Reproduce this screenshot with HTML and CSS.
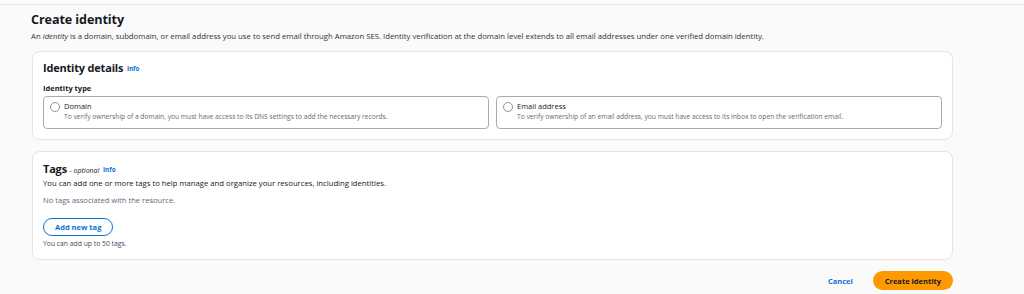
FILE: index.html
```html
<!DOCTYPE html>
<html lang="en">
<head>
    <meta charset="UTF-8">
    <meta name="viewport" content="width=device-width, initial-scale=1.0">
    <title>Create identity - Amazon SES</title>
    <link rel="stylesheet" href="styles.css">
</head>
<body>
    <div class="topline"></div>
    <main class="page">
        <h1>Create identity</h1>
        <p class="lead">An <i>identity</i> is a domain, subdomain, or email address you use to send email through Amazon SES. Identity verification at the domain level extends to all email addresses under one verified domain identity.</p>

        <section class="card details">
            <h2>Identity details <a class="info" href="#">Info</a></h2>
            <div class="field-label">Identity type</div>
            <div class="tiles">
                <label class="tile">
                    <span class="radio"></span>
                    <span class="tile-text">
                        <span class="tile-title">Domain</span>
                        <span class="tile-desc">To verify ownership of a domain, you must have access to its DNS settings to add the necessary records.</span>
                    </span>
                </label>
                <label class="tile">
                    <span class="radio"></span>
                    <span class="tile-text">
                        <span class="tile-title">Email address</span>
                        <span class="tile-desc">To verify ownership of an email address, you must have access to its inbox to open the verification email.</span>
                    </span>
                </label>
            </div>
        </section>

        <section class="card tags">
            <h2>Tags <em class="optional">- optional</em> <a class="info" href="#">Info</a></h2>
            <p class="tags-desc">You can add one or more tags to help manage and organize your resources, including identities.</p>
            <p class="empty">No tags associated with the resource.</p>
            <button class="btn-normal" type="button">Add new tag</button>
            <p class="hint">You can add up to 50 tags.</p>
        </section>

        <div class="actions">
            <a class="cancel" href="#">Cancel</a>
            <button class="btn-primary" type="button">Create identity</button>
        </div>
    </main>
</body>
</html>
```

FILE: styles.css
```css
body {
    margin: 0;
    background-color: #fafafa;
    font-family: "Open Sans", "Liberation Sans", sans-serif;
    color: #16191f;
}
.topline {
    height: 4px;
    border-bottom: 1px solid #e3e3e3;
}
.page {
    width: 922px;
    margin-left: 31px;
    padding-top: 5px;
}
h1 {
    margin: 0;
    font-size: 12.6px;
    font-weight: 700;
    letter-spacing: -0.1px;
    line-height: 20px;
}
.lead {
    margin: 0;
    font-size: 7.75px;
    line-height: 12px;
    color: #333;
}
.card {
    background-color: #fff;
    border: 1px solid #e4e4e4;
    border-radius: 8px;
    margin-left: 1px;
    padding: 7px 10px 10px 10px;
}
.details {
    margin-top: 9px;
    height: 70px;
}
h2 {
    margin: 0;
    font-size: 11px;
    font-weight: 700;
    letter-spacing: -0.2px;
    line-height: 17px;
}
.info {
    font-size: 6.3px;
    font-weight: 700;
    letter-spacing: 0;
    color: #0972d3;
    text-decoration: none;
    margin-left: 1px;
    vertical-align: 1px;
}
.field-label {
    margin-top: 6px;
    font-size: 7.5px;
    font-weight: 700;
    line-height: 11px;
}
.tiles {
    display: flex;
    gap: 7px;
    margin-top: 2px;
}
.tile {
    flex: 1;
    display: flex;
    gap: 4px;
    border: 1px solid #a8acb2;
    border-radius: 4px;
    padding: 4px 8px 4px 6px;
    height: 23px;
}
.radio {
    flex: none;
    width: 8px;
    height: 8px;
    border: 1px solid #8d9096;
    border-radius: 50%;
    margin-top: 1px;
    background-color: #fff;
}
.tile-text {
    display: flex;
    flex-direction: column;
}
.tile-title {
    font-size: 7.5px;
    line-height: 11px;
}
.tile-desc {
    font-size: 6.7px;
    line-height: 10px;
    color: #5f6b7a;
}
.tags {
    margin-top: 11px;
    height: 87px;
    padding-top: 10px;
}
.tags h2 {
    line-height: 14px;
}
.optional {
    font-size: 7px;
    font-weight: 400;
    letter-spacing: 0;
}
.tags-desc {
    margin: 0;
    font-size: 7.7px;
    line-height: 11px;
}
.empty {
    margin: 5px 0 0 0;
    font-size: 7.6px;
    line-height: 12px;
    color: #5f6b7a;
}
.btn-normal {
    margin-top: 12px;
    height: 18px;
    padding: 0 11px;
    border: 1.5px solid #0972d3;
    border-radius: 10px;
    background-color: #fff;
    color: #0972d3;
    font-family: inherit;
    font-size: 7.5px;
    font-weight: 700;
    cursor: pointer;
}
.hint {
    margin: 3px 0 0 0;
    font-size: 6.8px;
    line-height: 10px;
    color: #414d5c;
}
.actions {
    display: flex;
    justify-content: flex-end;
    align-items: center;
    gap: 20px;
    margin-top: 11px;
}
.cancel {
    font-size: 7.5px;
    font-weight: 700;
    color: #0972d3;
    text-decoration: none;
}
.btn-primary {
    height: 19px;
    padding: 0 12px;
    border: none;
    border-radius: 10px;
    background-color: #ff9900;
    color: #16191f;
    font-family: inherit;
    font-size: 7.5px;
    font-weight: 700;
    cursor: pointer;
}
```
